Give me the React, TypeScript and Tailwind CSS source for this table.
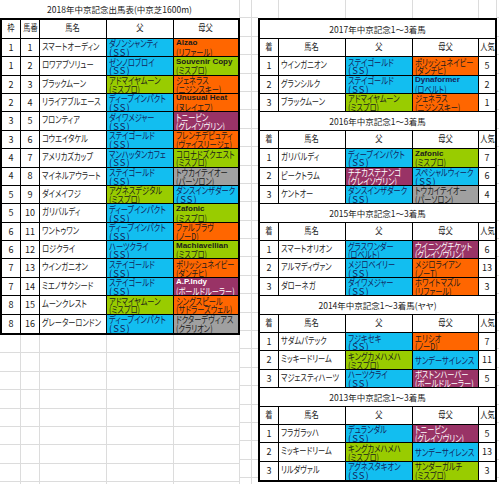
type Tone = 'c' | 'o' | 'g' | 'p' | 's'
type Blood = [string, string, Tone]
type LeftRow = [string, string, string, Blood, Blood]
type RightRow = [string, string, Blood, Blood, string]

const tone: Record<Tone, string> = {
  c: 'bg-[#12bef0] text-[#13245c]',
  o: 'bg-[#ff6600] text-[#1b1b1b]',
  g: 'bg-[#99cc00] text-[#1b1b1b]',
  p: 'bg-[#993366] text-white',
  s: 'bg-[#a0a0a0] text-[#1b1b1b]',
}

const leftRows: LeftRow[] = [
  ['1', '1', 'スマートオーディン', ['ダノンシャンティ', '(SS)', 'c'], ['Alzao', '(リファール)', 'o']],
  ['1', '2', 'ロワアブソリュー', ['ゼンノロブロイ', '(SS)', 'c'], ['Souvenir Copy', '(ミスプロ)', 'g']],
  ['2', '3', 'ブラックムーン', ['アドマイヤムーン', '(ミスプロ)', 'g'], ['ジェネラス', '(ニジンスキー)', 'o']],
  ['2', '4', 'リライアブルエース', ['ディープインパクト', '(SS)', 'c'], ['Unusual Heat', '(ヌレイエフ)', 'o']],
  ['3', '5', 'フロンティア', ['ダイワメジャー', '(SS)', 'c'], ['トニービン', '(グレイソヴリン)', 'p']],
  ['3', '6', 'コウエイタケル', ['ステイゴールド', '(SS)', 'c'], ['フレンチデピュティ', '(ヴァイスリージェ)', 'o']],
  ['4', '7', 'アメリカズカップ', ['マンハッタンカフェ', '(SS)', 'c'], ['コロナドズクエスト', '(ミスプロ)', 'g']],
  ['4', '8', 'マイネルアウラート', ['ステイゴールド', '(SS)', 'c'], ['トウカイテイオー', '(パーソロン)', 's']],
  ['5', '9', 'ダイメイフジ', ['アグネスデジタル', '(ミスプロ)', 'g'], ['ダンスインザダーク', '(SS)', 'c']],
  ['5', '10', 'ガリバルディ', ['ディープインパクト', '(SS)', 'c'], ['Zafonic', '(ミスプロ)', 'g']],
  ['6', '11', 'ワントゥワン', ['ディープインパクト', '(SS)', 'c'], ['ファルブラヴ', '(ノーD)', 'o']],
  ['6', '12', 'ロジクライ', ['ハーツクライ', '(SS)', 'c'], ['Machiavellian', '(ミスプロ)', 'g']],
  ['7', '13', 'ウインガニオン', ['ステイゴールド', '(SS)', 'c'], ['ポリッシュネイビー', '(ダンチヒ)', 'o']],
  ['7', '14', 'ミエノサクシード', ['ステイゴールド', '(SS)', 'c'], ['A.P.Indy', '(ボールドルーラー)', 'p']],
  ['8', '15', 'ムーンクレスト', ['アドマイヤムーン', '(ミスプロ)', 'g'], ['シングスピール', '(サドラーズウェル)', 'o']],
  ['8', '16', 'グレーターロンドン', ['ディープインパクト', '(SS)', 'c'], ['ドクターデヴィアス', '(クラリオン)', 's']],
]

const sections: { title: string; rows: RightRow[] }[] = [
  {
    title: '2017年中京記念1～3着馬',
    rows: [
      ['1', 'ウインガニオン', ['ステイゴールド', '(SS)', 'c'], ['ポリッシュネイビー', '(ダンチヒ)', 'o'], '5'],
      ['2', 'グランシルク', ['ステイゴールド', '(SS)', 'c'], ['Dynaformer', '(ロベルト)', 'c'], '2'],
      ['3', 'ブラックムーン', ['アドマイヤムーン', '(ミスプロ)', 'g'], ['ジェネラス', '(ニジンスキー)', 'o'], '1'],
    ],
  },
  {
    title: '2016年中京記念1～3着馬',
    rows: [
      ['1', 'ガリバルディ', ['ディープインパクト', '(SS)', 'c'], ['Zafonic', '(ミスプロ)', 'g'], '7'],
      ['2', 'ピークトラム', ['チチカステナンゴ', '(グレイソヴリン)', 'p'], ['スペシャルウィーク', '(SS)', 'c'], '6'],
      ['3', 'ケントオー', ['ダンスインザダーク', '(SS)', 'c'], ['トウカイテイオー', '(パーソロン)', 's'], '4'],
    ],
  },
  {
    title: '2015年中京記念1～3着馬',
    rows: [
      ['1', 'スマートオリオン', ['グラスワンダー', '(ロベルト)', 'c'], ['ウイニングチケット', '(グレイソヴリン)', 'p'], '6'],
      ['2', 'アルマディヴァン', ['メジロベイリー', '(SS)', 'c'], ['メジロライアン', '(ノーT)', 'o'], '13'],
      ['3', 'ダローネガ', ['ダイワメジャー', '(SS)', 'c'], ['ホワイトマズル', '(リファール)', 'o'], '3'],
    ],
  },
  {
    title: '2014年中京記念1～3着馬(ヤヤ)',
    rows: [
      ['1', 'サダムパテック', ['フジキセキ', '(SS)', 'c'], ['エリシオ', '(ノーD)', 'o'], '7'],
      ['2', 'ミッキードリーム', ['キングカメハメハ', '(ミスプロ)', 'g'], ['サンデーサイレンス', '', 'c'], '11'],
      ['3', 'マジェスティハーツ', ['ハーツクライ', '(SS)', 'c'], ['ボストンハーバー', '(ボールドルーラー)', 'p'], '5'],
    ],
  },
  {
    title: '2013年中京記念1～3着馬',
    rows: [
      ['1', 'フラガラッハ', ['デュランダル', '(SS)', 'c'], ['トニービン', '(グレイソヴリン)', 'p'], '5'],
      ['2', 'ミッキードリーム', ['キングカメハメハ', '(ミスプロ)', 'g'], ['サンデーサイレンス', '', 'c'], '13'],
      ['3', 'リルダヴァル', ['アグネスタキオン', '(SS)', 'c'], ['サンダーガルチ', '(ミスプロ)', 'g'], '3'],
    ],
  },
]

const isLatin = (s: string) => /^[A-Za-z .]+$/.test(s)

// narrow kana like the spreadsheet's proportional gothic
const Jp = ({ children, center }: { children: React.ReactNode; center?: boolean }) => (
  <span className={`inline-block self-start whitespace-nowrap scale-x-[0.76] ${center ? 'origin-center' : 'origin-left'}`}>
    {children}
  </span>
)

function Line({ text }: { text: string }) {
  if (isLatin(text)) return <span className="self-start font-['Liberation_Sans',sans-serif] text-[8px] font-bold">{text}</span>
  if (text === '(SS)') return <span className="self-start tracking-[1px]">{text}</span>
  return <Jp>{text}</Jp>
}

function BloodCell({ b, edge }: { b: Blood; edge?: boolean }) {
  const [name, line, t] = b
  return (
    <div
      className={`${tone[t]} ${edge ? '' : 'border-r border-black'} flex flex-col overflow-hidden whitespace-nowrap px-[2px] leading-[8.7px] ${line ? 'justify-start pt-[0.5px]' : 'justify-center'}`}
    >
      <Line text={name} />
      {line && <Line text={line} />}
    </div>
  )
}

const Center = ({ children, edge }: { children: React.ReactNode; edge?: boolean }) => (
  <div className={`${edge ? '' : 'border-r border-black'} flex items-center justify-center overflow-hidden whitespace-nowrap text-[9px]`}>
    {children}
  </div>
)

const Head = ({ children, edge }: { children: React.ReactNode; edge?: boolean }) => (
  <div className={`${edge ? '' : 'border-r border-black'} flex items-center justify-center overflow-hidden whitespace-nowrap`}>
    <Jp center>{children}</Jp>
  </div>
)

const Name = ({ children }: { children: React.ReactNode }) => (
  <div className="flex items-center overflow-hidden whitespace-nowrap border-r border-black px-[2px]">
    <Jp>{children}</Jp>
  </div>
)

function LeftTable() {
  return (
    <div className="flex w-[240px] flex-col border-2 border-black">
      <div className="grid h-[18.4px] grid-cols-[19px_19px_67px_67px_64px] border-b border-black">
        <Head>枠</Head>
        <Head>馬番</Head>
        <Head>馬名</Head>
        <Head>父</Head>
        <Head edge>母父</Head>
      </div>
      {leftRows.map((r, i) => (
        <div
          key={i}
          className={`grid h-[18.4px] grid-cols-[19px_19px_67px_67px_64px] ${i < leftRows.length - 1 ? 'border-b border-black' : ''}`}
        >
          <Center>{r[0]}</Center>
          <Center>{r[1]}</Center>
          <Name>{r[2]}</Name>
          <BloodCell b={r[3]} />
          <BloodCell b={r[4]} edge />
        </div>
      ))}
    </div>
  )
}

function RightTable() {
  return (
    <div className="flex w-[239px] flex-col border-2 border-black">
      {sections.map((s, si) => (
        <div key={s.title} className="flex flex-col">
          <div className="flex h-[18.4px] items-center justify-center border-b border-black text-[8.5px]">{s.title}</div>
          <div className="grid h-[18.4px] grid-cols-[19px_67px_67px_66px_16px] border-b border-black">
            <Head>着</Head>
            <Head>馬名</Head>
            <Head>父</Head>
            <Head>母父</Head>
            <Head edge>人気</Head>
          </div>
          {s.rows.map((r, i) => (
            <div
              key={i}
              className={`grid h-[18.4px] grid-cols-[19px_67px_67px_66px_16px] ${si === sections.length - 1 && i === 2 ? '' : 'border-b border-black'}`}
            >
              <Center>{r[0]}</Center>
              <Name>{r[1]}</Name>
              <BloodCell b={r[2]} />
              <BloodCell b={r[3]} />
              <Center edge>{r[4]}</Center>
            </div>
          ))}
        </div>
      ))}
    </div>
  )
}

const blankRows = (n: number) => Array.from({ length: n }, (_, i) => i)

export default function App() {
  return (
    <div className="flex h-[484px] w-[499px] overflow-hidden bg-white font-['Noto_Sans_CJK_JP',sans-serif] text-[9.5px] text-[#1b1b1b] [font-feature-settings:'palt']">
      <div className="flex w-[240px] shrink-0 flex-col">
        <div className="flex h-[18.4px] shrink-0 items-center justify-center border-r border-[#dcdcdc] text-[8.5px]">
          2018年中京記念出馬表(中京芝1600m)
        </div>
        <LeftTable />
        {blankRows(9).map((i) => (
          <div key={i} className="grid h-[18.4px] shrink-0 grid-cols-[21px_19px_67px_67px_66px] border-b border-[#dcdcdc]">
            <div className="border-r border-[#dcdcdc]" />
            <div className="border-r border-[#dcdcdc]" />
            <div className="border-r border-[#dcdcdc]" />
            <div className="border-r border-[#dcdcdc]" />
            <div className="border-r border-[#dcdcdc]" />
          </div>
        ))}
      </div>

      <div className="flex w-[12px] shrink-0 flex-col">
        {blankRows(27).map((i) => (
          <div key={i} className="h-[18.4px] shrink-0 border-r border-b border-[#dcdcdc]" />
        ))}
      </div>
      <div className="flex w-[6px] shrink-0 flex-col">
        {blankRows(27).map((i) => (
          <div key={i} className="h-[18.4px] shrink-0 border-b border-[#dcdcdc]" />
        ))}
      </div>

      <div className="flex w-[239px] shrink-0 flex-col">
        <div className="grid h-[18.4px] shrink-0 grid-cols-[21px_67px_67px_66px_18px]">
          <div className="border-r border-[#dcdcdc]" />
          <div className="border-r border-[#dcdcdc]" />
          <div className="border-r border-[#dcdcdc]" />
          <div className="border-r border-[#dcdcdc]" />
          <div className="border-r border-[#dcdcdc]" />
        </div>
        <RightTable />
      </div>

      <div className="flex flex-1 flex-col">
        {blankRows(27).map((i) => (
          <div key={i} className="h-[18.4px] shrink-0 border-b border-[#dcdcdc]" />
        ))}
      </div>
    </div>
  )
}
